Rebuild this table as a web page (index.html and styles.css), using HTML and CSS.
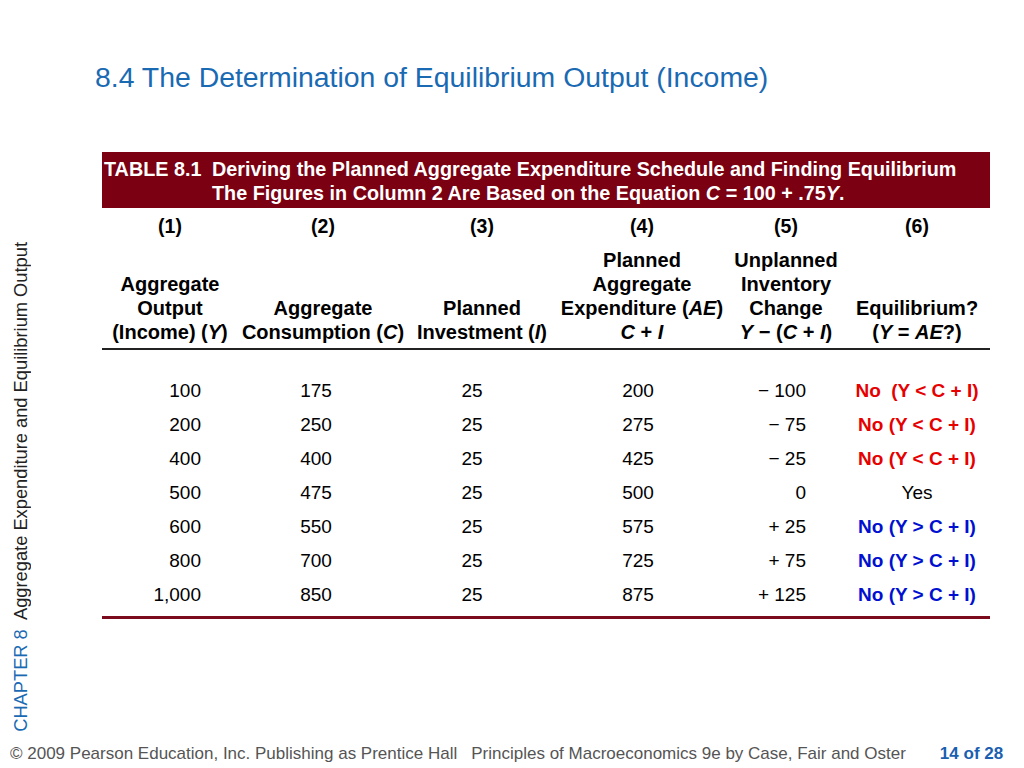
FILE: index.html
```html
<!DOCTYPE html>
<html>
<head>
<meta charset="utf-8">
<link rel="stylesheet" href="styles.css">
</head>
<body>
<div class="slide">
  <div class="main">
    <div class="side"><span class="side-text"><span class="chap">CHAPTER 8</span>&nbsp; Aggregate Expenditure and Equilibrium Output</span></div>
    <div class="content">
      <h1 class="title">8.4 The Determination of Equilibrium Output (Income)</h1>
      <div class="tbl">
        <div class="caption">
          <div class="cap-label">TABLE 8.1</div>
          <div class="cap-text">Deriving the Planned Aggregate Expenditure Schedule and Finding Equilibrium<br>The Figures in Column 2 Are Based on the Equation <i>C</i> = 100 + .75<i>Y</i>.</div>
        </div>
        <div class="grid nums">
          <div>(1)</div><div>(2)</div><div>(3)</div><div>(4)</div><div>(5)</div><div>(6)</div>
        </div>
        <div class="grid heads">
          <div>Aggregate<br>Output<br>(Income) (<i>Y</i>)</div>
          <div>Aggregate<br>Consumption (<i>C</i>)</div>
          <div>Planned<br>Investment (<i>I</i>)</div>
          <div>Planned<br>Aggregate<br>Expenditure (<i>AE</i>)<br><i>C</i> + <i>I</i></div>
          <div>Unplanned<br>Inventory<br>Change<br><i>Y</i> &minus; (<i>C</i> + <i>I</i>)</div>
          <div>Equilibrium?<br>(<i>Y</i> = <i>AE</i>?)</div>
        </div>
        <div class="body">
          <div class="grid row"><div class="c1">100</div><div class="c2">175</div><div class="c3">25</div><div class="c4">200</div><div class="c5">&minus; 100</div><div class="c6 red">No&nbsp; (Y &lt; C + I)</div></div>
          <div class="grid row"><div class="c1">200</div><div class="c2">250</div><div class="c3">25</div><div class="c4">275</div><div class="c5">&minus; 75</div><div class="c6 red">No (Y &lt; C + I)</div></div>
          <div class="grid row"><div class="c1">400</div><div class="c2">400</div><div class="c3">25</div><div class="c4">425</div><div class="c5">&minus; 25</div><div class="c6 red">No (Y &lt; C + I)</div></div>
          <div class="grid row"><div class="c1">500</div><div class="c2">475</div><div class="c3">25</div><div class="c4">500</div><div class="c5">0</div><div class="c6">Yes</div></div>
          <div class="grid row"><div class="c1">600</div><div class="c2">550</div><div class="c3">25</div><div class="c4">575</div><div class="c5">+ 25</div><div class="c6 blue">No (Y &gt; C + I)</div></div>
          <div class="grid row"><div class="c1">800</div><div class="c2">700</div><div class="c3">25</div><div class="c4">725</div><div class="c5">+ 75</div><div class="c6 blue">No (Y &gt; C + I)</div></div>
          <div class="grid row"><div class="c1">1,000</div><div class="c2">850</div><div class="c3">25</div><div class="c4">875</div><div class="c5">+ 125</div><div class="c6 blue">No (Y &gt; C + I)</div></div>
        </div>
      </div>
    </div>
  </div>
  <div class="footer">
    <span class="f1">&copy; 2009 Pearson Education, Inc. Publishing as Prentice Hall</span>
    <span class="f2">Principles of Macroeconomics 9e by Case, Fair and Oster</span>
    <span class="f3">14 of 28</span>
  </div>
</div>
</body>
</html>
```
FILE: styles.css
```css
html, body {
  margin: 0;
  padding: 0;
  background: #fff;
}
body {
  font-family: "Liberation Sans", Arial, sans-serif;
  color: #000;
}
.slide {
  width: 1024px;
  height: 768px;
  display: flex;
  flex-direction: column;
  overflow: hidden;
}
.main {
  flex: 1;
  display: flex;
}
.side {
  width: 42px;
  display: flex;
  flex-direction: column;
  justify-content: flex-end;
  align-items: center;
  padding-bottom: 8px;
  box-sizing: border-box;
}
.side-text {
  writing-mode: vertical-rl;
  transform: rotate(180deg);
  font-size: 18.3px;
  line-height: 20px;
  color: #222;
  white-space: nowrap;
}
.chap {
  color: #1a6ab3;
}
.content {
  flex: 1;
}
.title {
  margin: 59px 0 0 53px;
  font-size: 28.4px;
  font-weight: normal;
  line-height: 36px;
  color: #1a6ab3;
}
.tbl {
  margin: 57px 0 0 60px;
  width: 888px;
  border-bottom: 3px solid #7a0a1c;
  padding-bottom: 4px;
}
.caption {
  background: #7a0012;
  color: #fff;
  font-weight: bold;
  font-size: 19.8px;
  line-height: 24px;
  height: 56px;
  box-sizing: border-box;
  padding: 5px 0 0 2px;
  display: flex;
}
.cap-label {
  width: 108px;
  flex: none;
}
.grid {
  display: grid;
  grid-template-columns: 136px 170px 148px 172px 116px 146px;
}
.nums {
  font-weight: bold;
  font-size: 19.5px;
  line-height: 24px;
  text-align: center;
  padding-top: 6px;
}
.heads {
  font-weight: bold;
  font-size: 20px;
  line-height: 24px;
  text-align: center;
  align-items: end;
  padding-top: 10px;
  padding-bottom: 4px;
  border-bottom: 2px solid #222;
}
.body {
  padding-top: 24px;
}
.row {
  font-size: 19px;
  line-height: 34px;
}
.c1 { text-align: right; padding-right: 37px; }
.c2 { text-align: center; padding-right: 14px; }
.c3 { text-align: center; padding-right: 20px; }
.c4 { text-align: center; padding-right: 8px; }
.c5 { text-align: right; padding-right: 38px; }
.c6 { text-align: center; white-space: pre; }
.red { color: #e60000; font-weight: bold; }
.blue { color: #0010d0; font-weight: bold; }
.footer {
  height: 28px;
  line-height: 28px;
  font-size: 17px;
  color: #555;
  display: flex;
  padding-left: 10px;
  white-space: nowrap;
}
.f2 { margin-left: 14px; }
.f3 { margin-left: 34px; color: #1a5fb0; font-weight: bold; }
```
